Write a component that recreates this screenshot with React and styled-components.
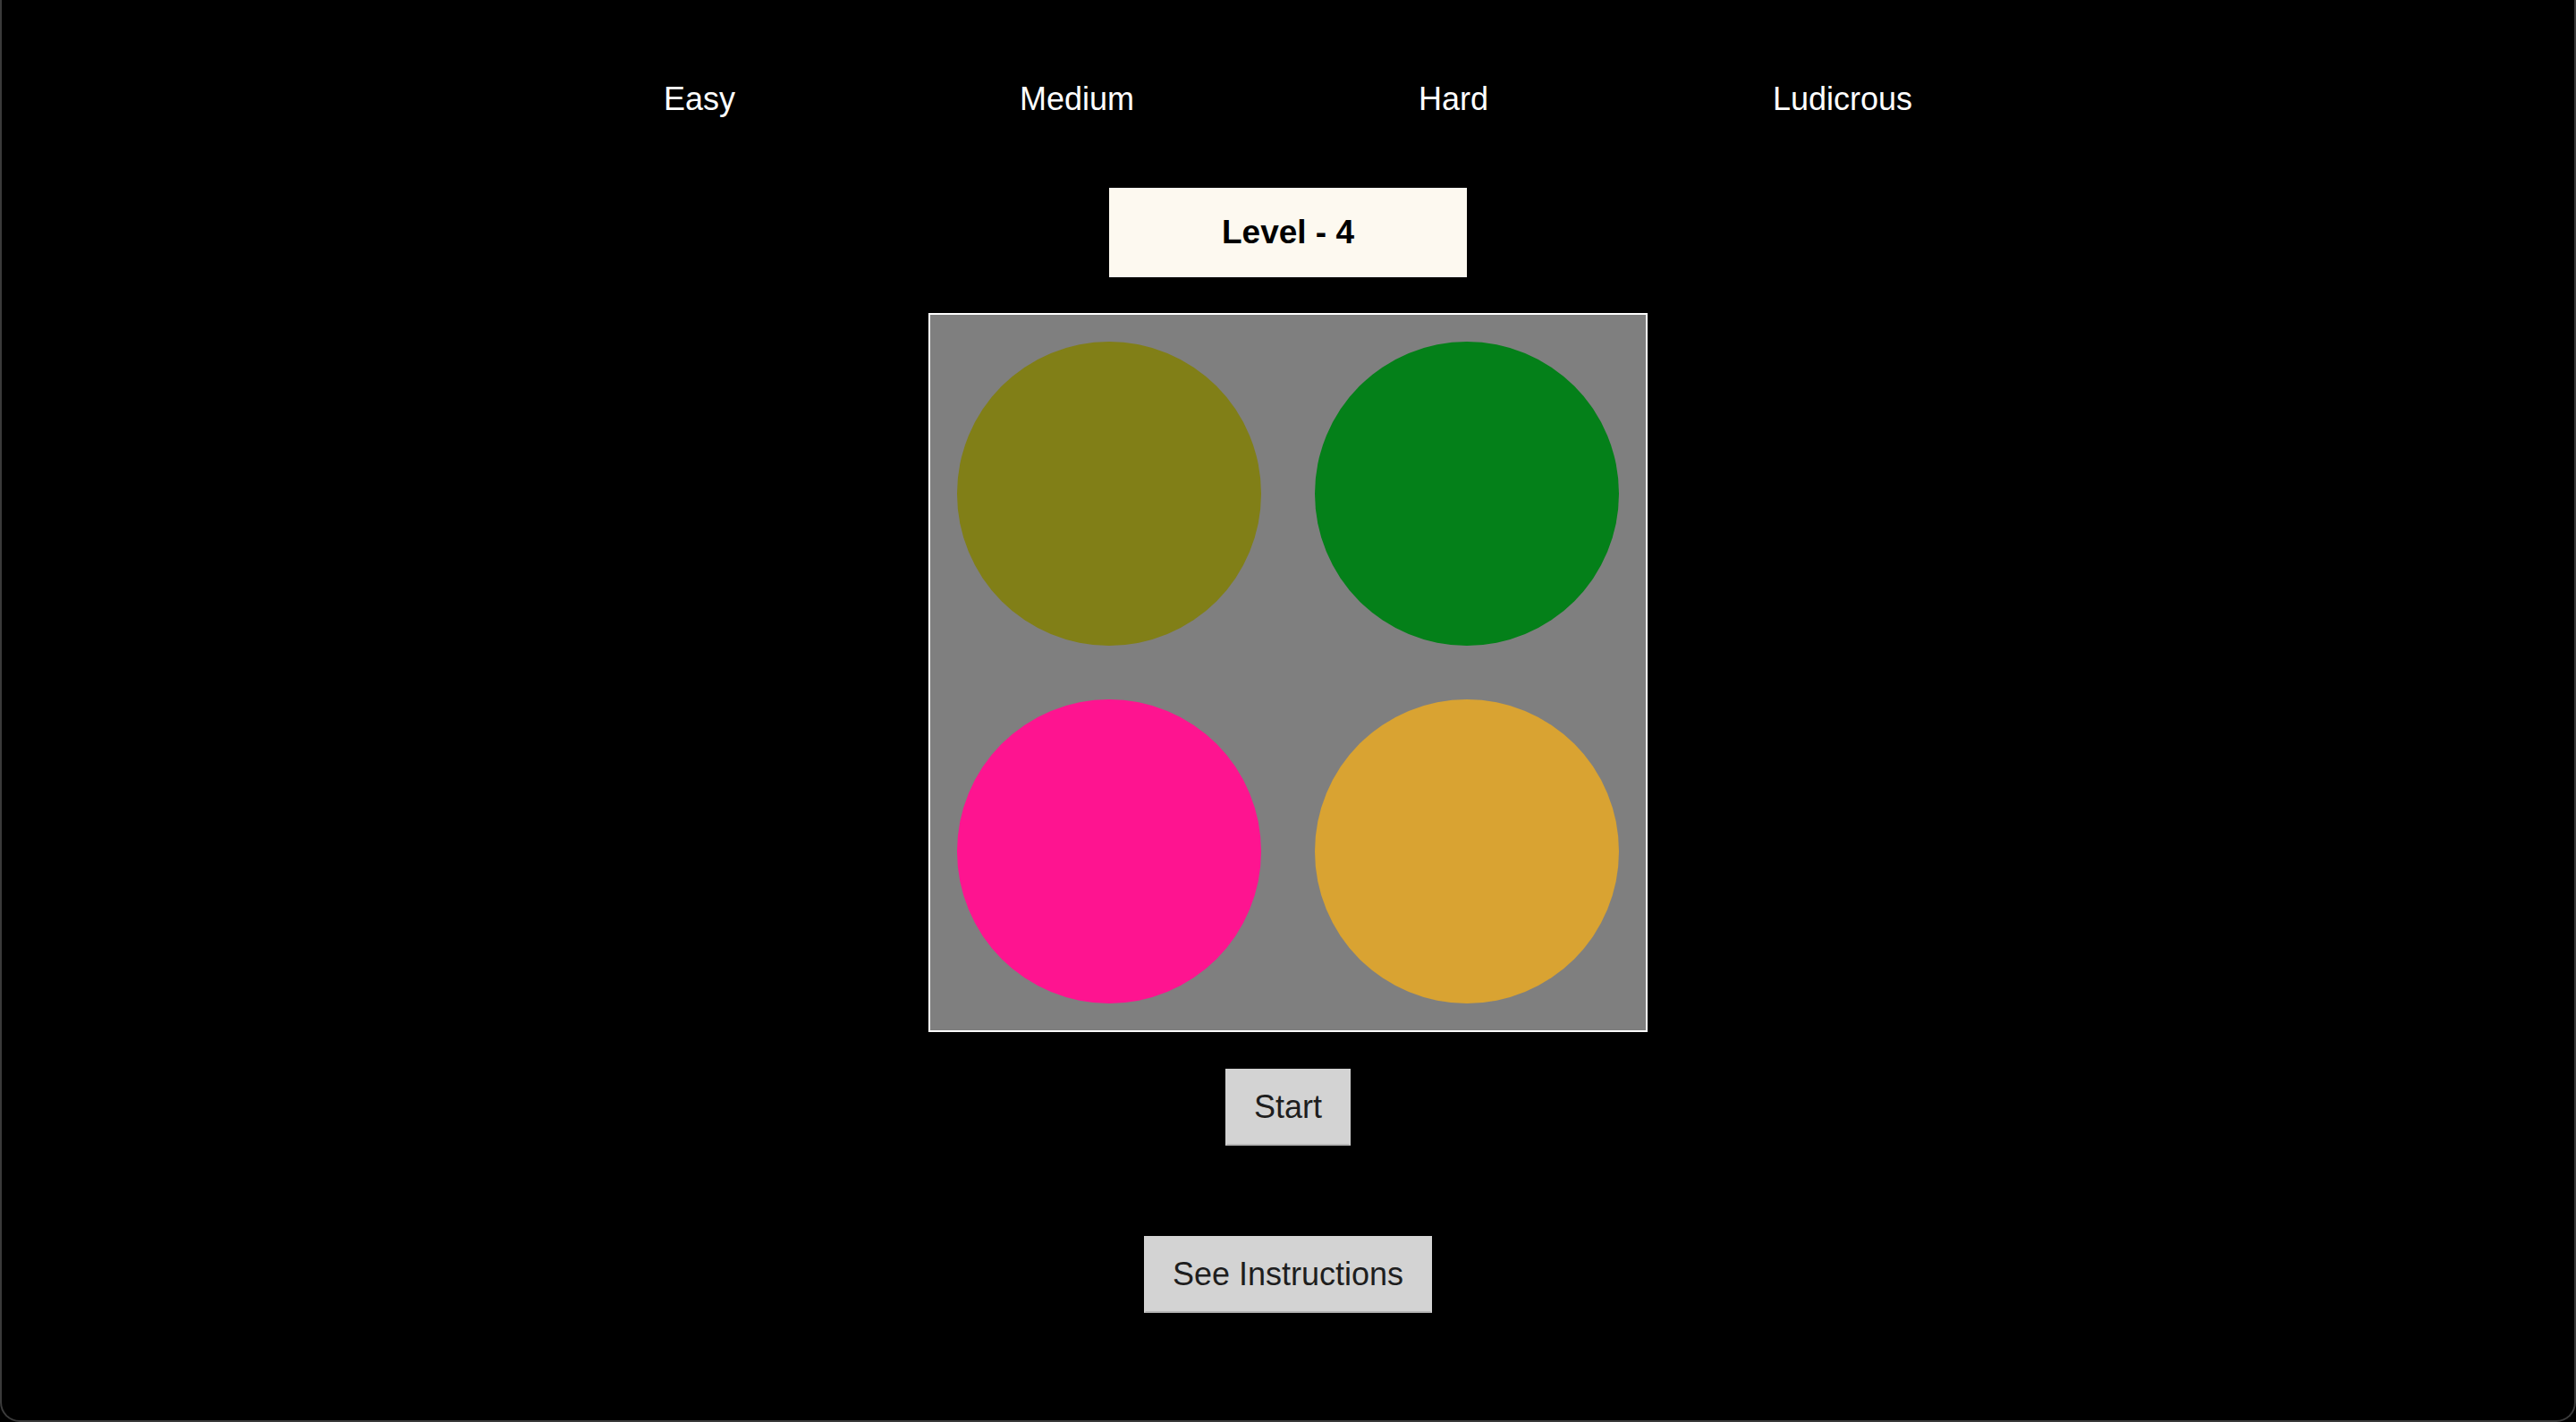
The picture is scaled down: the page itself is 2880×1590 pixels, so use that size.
import React from "react";
import styled, { createGlobalStyle } from "styled-components";

const levels = ["Easy", "Medium", "Hard", "Ludicrous"];
const circles = ["#817f17", "#048019", "#fe1490", "#d9a332"];

const GlobalStyle = createGlobalStyle`
  html, body {
    margin: 0;
    padding: 0;
    background: #000;
  }
  body {
    font-family: "Liberation Sans", Arial, Helvetica, sans-serif;
  }
`;

function App() {
  return (
    <>
      <GlobalStyle />
      <Frame>
        <LevelNav>
          {levels.map((item) => (
            <LevelLink key={item}>{item}</LevelLink>
          ))}
        </LevelNav>
        <LevelBadge>
          <h3>Level - 4</h3>
        </LevelBadge>
        <Board>
          {circles.map((color, index) => (
            <Cell key={index}>
              <Circle color={color} />
            </Cell>
          ))}
        </Board>
        <Button>Start</Button>
        <Button spaced>See Instructions</Button>
      </Frame>
    </>
  );
}

export default App;

const Frame = styled.div`
  box-sizing: border-box;
  width: 2880px;
  height: 1590px;
  display: flex;
  flex-direction: column;
  align-items: center;
  background: #000;
  border: 2px solid #3b3b3b;
  border-top: none;
  border-radius: 0 0 22px 22px;
  padding-top: 90px;
`;

const LevelNav = styled.nav`
  display: flex;
  justify-content: center;
  gap: 318px;
`;

const LevelLink = styled.span`
  color: #fff;
  font-size: 36px;
  line-height: 41px;
  cursor: pointer;
`;

const LevelBadge = styled.div`
  width: 400px;
  height: 100px;
  margin-top: 79px;
  background: #fdf9f0;
  display: flex;
  align-items: center;
  justify-content: center;

  h3 {
    margin: 0;
    font-size: 37px;
    font-weight: 700;
    color: #000;
  }
`;

const Board = styled.div`
  margin-top: 40px;
  width: 800px;
  height: 800px;
  border: 2px solid #fff;
  background: #7f7f7f;
  display: grid;
  grid-template-columns: 1fr 1fr;
  grid-template-rows: 1fr 1fr;
`;

const Cell = styled.div`
  display: flex;
  align-items: center;
  justify-content: center;
`;

const Circle = styled.div`
  width: 340px;
  height: 340px;
  border-radius: 50%;
  background: ${(props) => props.color};
`;

const Button = styled.button`
  margin-top: ${(props) => (props.spaced ? "101px" : "41px")};
  box-sizing: border-box;
  height: 86px;
  padding: 0 30px;
  background: #d3d3d3;
  border: 2px solid #d3d3d3;
  border-bottom-color: #b5b5b5;
  border-radius: 0;
  color: #1e1e1e;
  font-family: "Liberation Sans", Arial, Helvetica, sans-serif;
  font-size: 36px;
  cursor: pointer;
`;
